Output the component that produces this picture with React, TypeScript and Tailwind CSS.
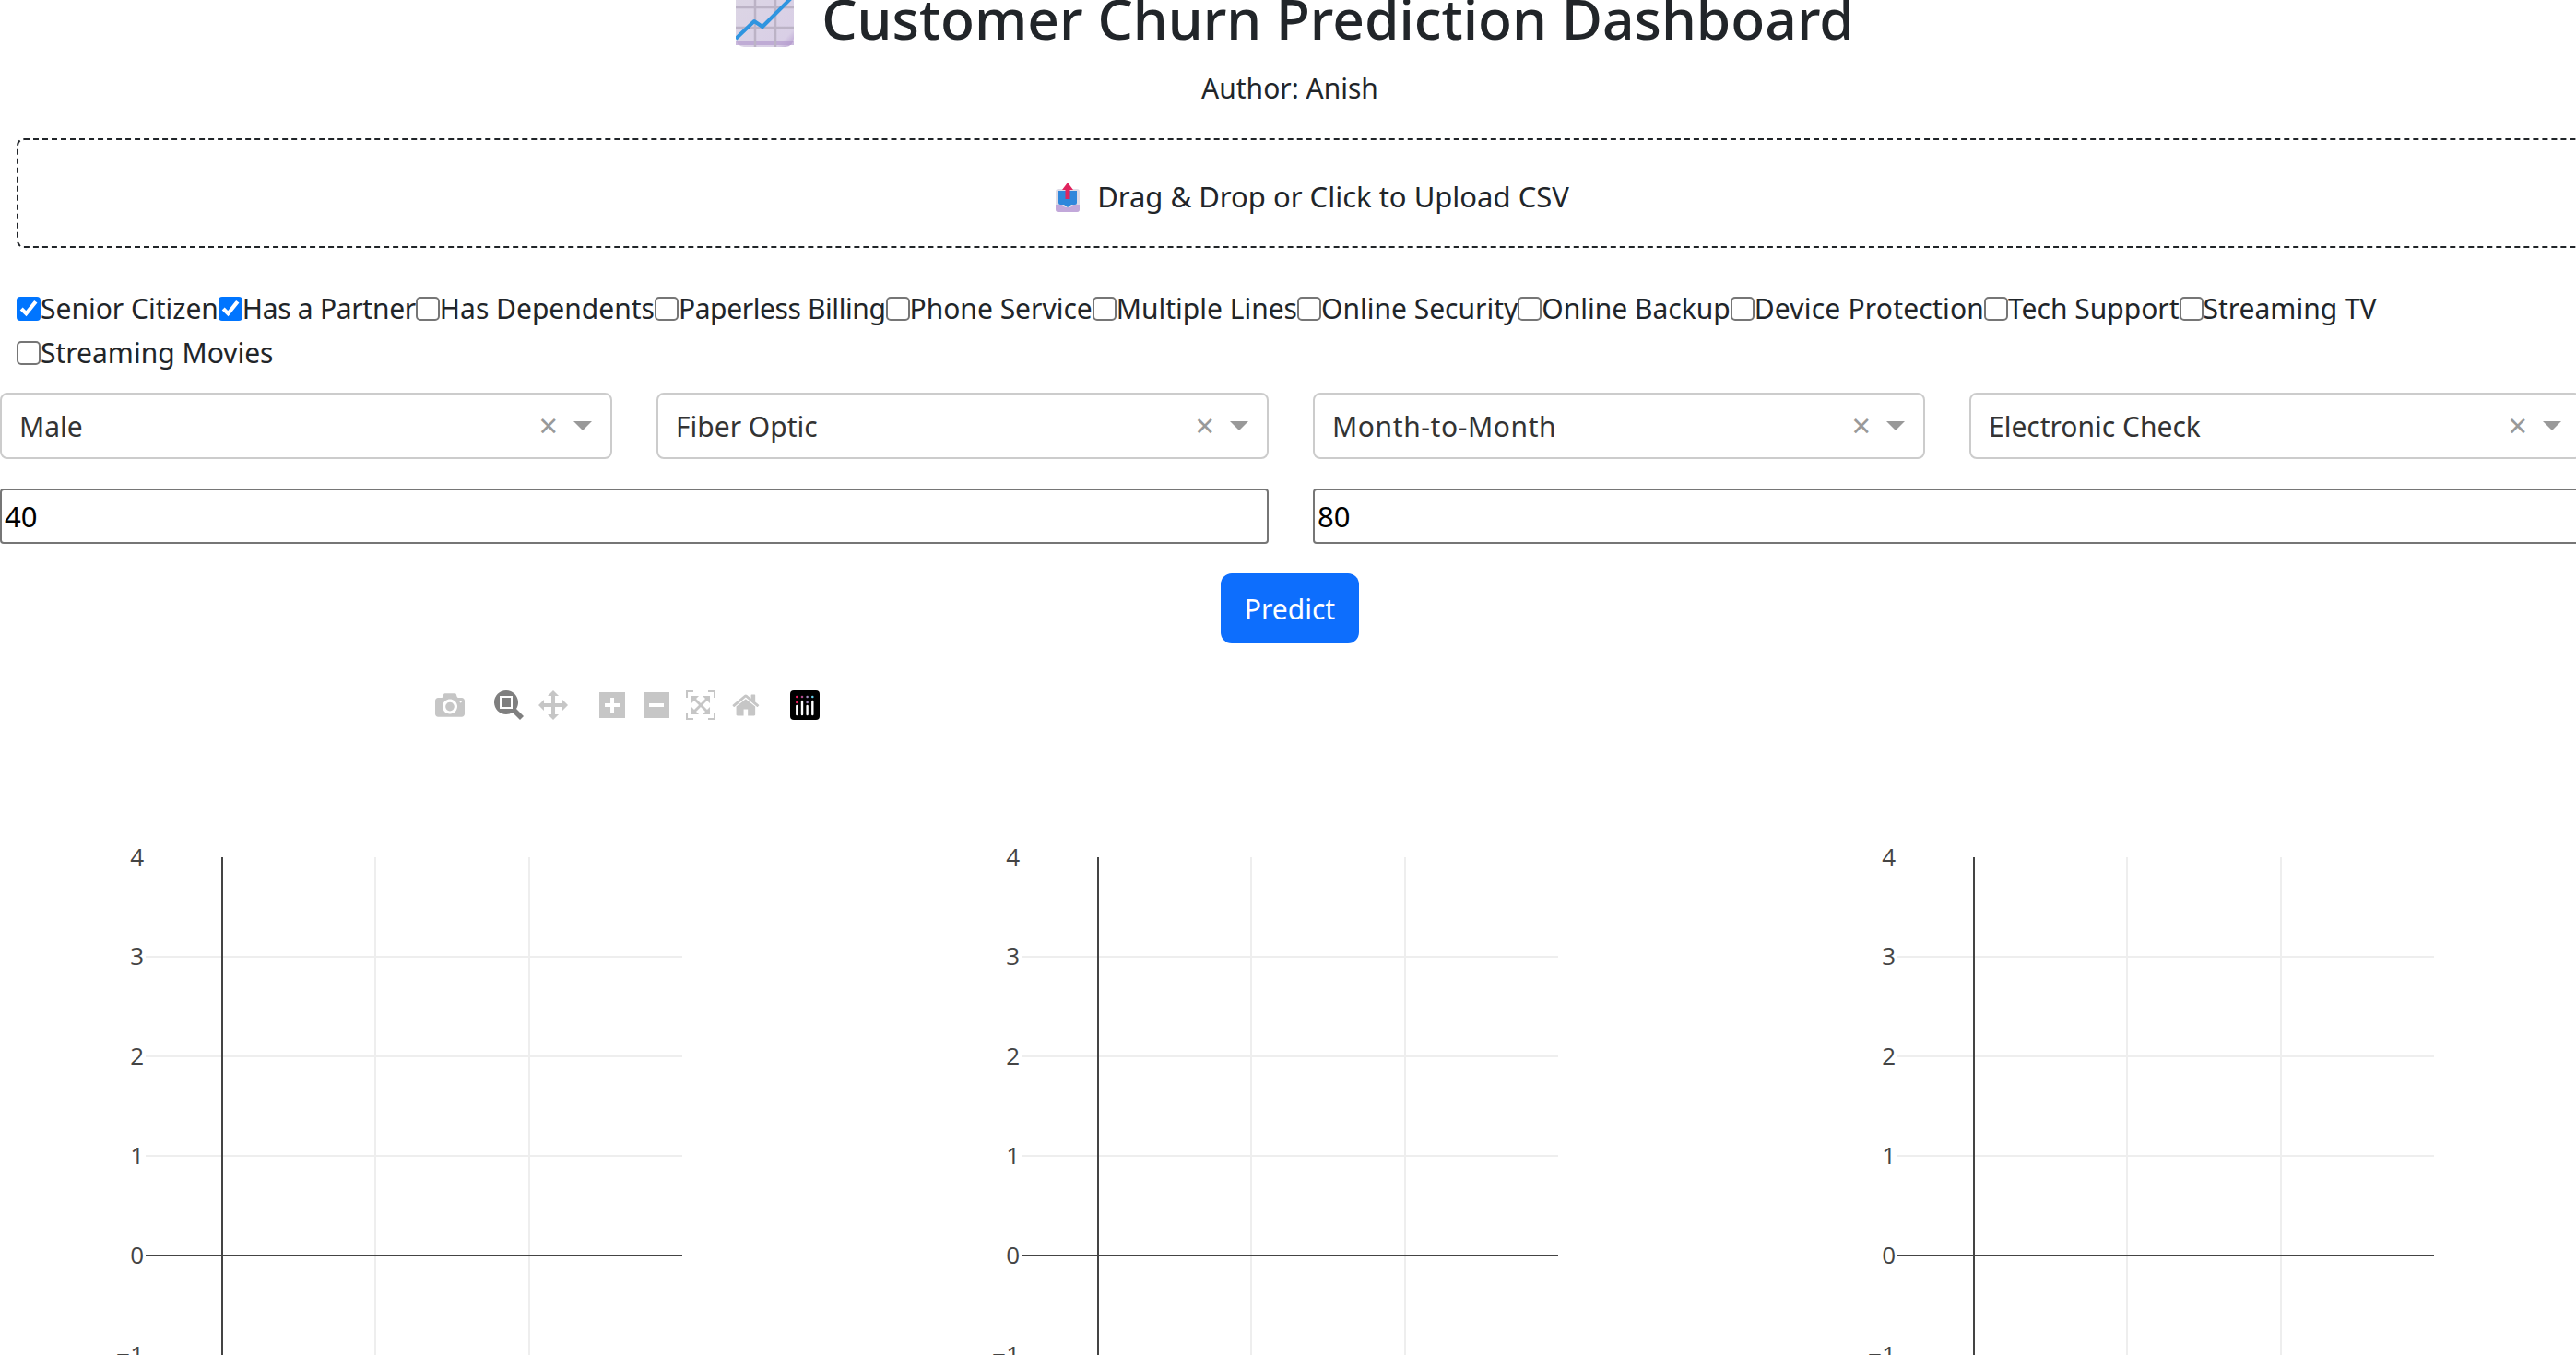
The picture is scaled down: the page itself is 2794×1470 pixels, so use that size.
import React from 'react'

const font = { fontFamily: '"Noto Sans", sans-serif' }

const options = [
  { label: 'Senior Citizen', checked: true, cls: '' },
  { label: 'Has a Partner', checked: true, cls: 'tracking-[-0.3px]' },
  { label: 'Has Dependents', cls: '' },
  { label: 'Paperless Billing', cls: 'tracking-[-0.4px]' },
  { label: 'Phone Service', cls: '' },
  { label: 'Multiple Lines', cls: '' },
  { label: 'Online Security', cls: '' },
  { label: 'Online Backup', cls: '' },
  { label: 'Device Protection', cls: 'tracking-[0.2px]' },
  { label: 'Tech Support', cls: '' },
  { label: 'Streaming TV', cls: '' },
  { label: 'Streaming Movies', cls: '' },
]

const selects = [
  { label: 'Male', cls: '' },
  { label: 'Fiber Optic', cls: '' },
  { label: 'Month-to-Month', cls: 'tracking-[0.6px]' },
  { label: 'Electronic Check', cls: '' },
]

const modeBarIcons = [
  { w: 1000, size: 32, ml: 0, fill: '#c6c6c6', d: 'M500 450c-83 0-150-67-150-150 0-83 67-150 150-150 83 0 150 67 150 150 0 83-67 150-150 150z m400 150h-120c-16 0-34 13-39 29l-31 93c-6 15-23 28-40 28h-340c-16 0-34-13-39-28l-31-94c-6-15-23-28-40-28h-120c-55 0-100-45-100-100v-450c0-55 45-100 100-100h800c55 0 100 45 100 100v450c0 55-45 100-100 100z m-400-550c-138 0-250 112-250 250 0 138 112 250 250 250 138 0 250-112 250-250 0-138-112-250-250-250z m365 380c-19 0-35 16-35 35 0 19 16 35 35 35 19 0 35-16 35-35 0-19-16-35-35-35z' },
  { w: 1000, size: 32, ml: 32, fill: '#7f7f7f', d: 'm1000-25l-250 251c40 63 63 138 63 218 0 224-182 406-407 406-224 0-406-182-406-406s183-406 407-406c80 0 155 22 218 62l250-250 125 125z m-812 250l0 438 437 0 0-438-437 0z m62 375l313 0 0-312-313 0 0 312z' },
  { w: 1000, size: 32, ml: 16, fill: '#c6c6c6', d: 'm1000 350l-187 188 0-125-250 0 0 250 125 0-188 187-187-187 125 0 0-250-250 0 0 125-188-188 186-187 0 125 252 0 0-250-125 0 187-188 188 188-125 0 0 250 250 0 0-126 187 188z' },
  { w: 875, size: 32, ml: 34, fill: '#c6c6c6', d: 'm1 787l0-875 875 0 0 875-875 0z m687-500l-187 0 0-187-125 0 0 187-188 0 0 125 188 0 0 187 125 0 0-187 187 0 0-125z' },
  { w: 875, size: 32, ml: 20, fill: '#c6c6c6', d: 'm0 788l0-876 875 0 0 876-875 0z m688-500l-500 0 0 125 500 0 0-125z' },
  { w: 1000, size: 32, ml: 18, fill: '#c6c6c6', d: 'm250 850l-187 0-63 0 0-62 0-188 63 0 0 188 187 0 0 62z m688 0l-188 0 0-62 188 0 0-188 62 0 0 188 0 62-62 0z m-875-938l0 188-63 0 0-188 0-62 63 0 187 0 0 62-187 0z m875 188l0-188-188 0 0-62 188 0 62 0 0 62 0 188-62 0z m-125 188l-1 0-93-94-156 156 156 156 92-93 2 0 0 250-250 0 0-2 93-92-156-156-156 156 94 92 0 2-250 0 0-250 0 0 93 93 157-156-157-156-93 94 0 0 0-250 250 0 0 0-94 93 156 157 156-157-93-93 0 0 250 0 0 250z' },
  { w: 928.6, size: 32, ml: 18, fill: '#c6c6c6', d: 'm786 296v-267q0-15-11-26t-25-10h-214v214h-143v-214h-214q-15 0-25 10t-11 26v267q0 1 0 2t0 2l321 264 321-264q1-1 1-4z m124 39l-34-41q-5-5-12-6h-2q-7 0-12 3l-386 322-386-322q-7-4-13-4-7 2-12 7l-34 41q-4 5-3 13t6 12l401 334q18 15 42 15t43-15l136-114v109q0 8 5 13t13 5h107q8 0 13-5t5-13v-227l122-102q5-5 6-12t-4-13z' },
]

function ChartEmoji() {
  return (
    <svg width="64" height="64" viewBox="0 0 64 64" className="shrink-0">
      <defs>
        <linearGradient id="sheet" x1="0" y1="0" x2="1" y2="1">
          <stop offset="0" stopColor="#dcd6e4" />
          <stop offset="0.85" stopColor="#d9cfe6" />
          <stop offset="1" stopColor="#b79fd0" />
        </linearGradient>
      </defs>
      <rect x="0" y="0" width="63" height="64" rx="9" fill="url(#sheet)" />
      <path d="M0 60h63" stroke="#b59ccf" strokeWidth="4" opacity="0.7" />
      <path d="M21 0v64M43 0v64M0 21h63M0 43h63" stroke="#bcb3c6" strokeWidth="2.5" />
      <path d="M0 55L20 36L29 42L61 10" fill="none" stroke="#2f95e0" strokeWidth="4" strokeLinejoin="round" />
    </svg>
  )
}

function UploadEmoji() {
  return (
    <svg width="26" height="32" viewBox="0 0 26 32" className="shrink-0">
      <rect x="0" y="7" width="26" height="25" rx="3" fill="#dedbe6" />
      <path d="M0 24h7l3 3h6l3-3h7v5a3 3 0 0 1-3 3H3a3 3 0 0 1-3-3z" fill="#c2a8da" />
      <path d="M3 9h20v13a2 2 0 0 1-2 2h-4l-4 3-4-3H5a2 2 0 0 1-2-2z" fill="#2f87db" />
      <path d="M13 0l6 8h-3.500v10h-5V8H7z" fill="#e0245e" />
    </svg>
  )
}

function PlotlyLogo() {
  return (
    <svg width="32" height="32" viewBox="0 0 32 32" className="ml-[33px]">
      <rect width="32" height="32" rx="4" fill="#000" />
      <circle cx="7.300" cy="7" r="1.300" fill="#ef1e5f" />
      <circle cx="13" cy="7" r="1.300" fill="#b24a8e" />
      <circle cx="18.600" cy="7" r="1.300" fill="#a58dc0" />
      <circle cx="24.300" cy="7" r="1.300" fill="#67d0ee" />
      <circle cx="7.300" cy="13" r="1.300" fill="#ef1e5f" />
      <circle cx="18.600" cy="13" r="1.300" fill="#a58dc0" />
      <path d="M7.300 17v9M13 12v14M18.600 17v9M24.300 12v14" stroke="#fff" strokeWidth="2.400" strokeLinecap="round" />
    </svg>
  )
}

function ModeBar() {
  return (
    <div className="absolute left-[472px] top-[19px] flex items-center">
      {modeBarIcons.map((icon, i) => (
        <svg
          key={i}
          width={(icon.w / 1000) * icon.size}
          height={icon.size}
          viewBox={`0 0 ${icon.w} 1000`}
          style={{ marginLeft: icon.ml }}
        >
          <path d={icon.d} fill={icon.fill} transform="matrix(1 0 0 -1 0 850)" />
        </svg>
      ))}
      <PlotlyLogo />
    </div>
  )
}

function Chart() {
  const ticks = [
    { label: '4', y: 200 },
    { label: '3', y: 308 },
    { label: '2', y: 416 },
    { label: '1', y: 524 },
    { label: '0', y: 632 },
    { label: '−1', y: 740 },
  ]
  return (
    <svg width="950" height="900" viewBox="0 0 950 900" className="shrink-0">
      <g shapeRendering="crispEdges">
        <path d="M407 200V900M574 200V900" stroke="#eeeeee" strokeWidth="2" />
        {ticks.slice(1, 4).map((t) => (
          <path key={t.label} d={`M158 ${t.y}H740`} stroke="#eeeeee" strokeWidth="2" />
        ))}
        <path d="M241 200V900" stroke="#444444" strokeWidth="2" />
        <path d="M158 632H740" stroke="#444444" strokeWidth="2" />
      </g>
      {ticks.map((t) => (
        <text key={t.label} x="156" y={t.y + 9} textAnchor="end" fontSize="26" fill="#444444" fontFamily='"Open Sans", sans-serif'>
          {t.label}
        </text>
      ))}
    </svg>
  )
}

function App() {
  return (
    <div className="h-screen w-screen overflow-hidden bg-white text-[#212529]" style={font}>
      <h1 className="-mt-[29px] flex h-[96px] items-center justify-center gap-[29px] pl-[15px] text-[60.5px] font-medium leading-[96px]">
        <ChartEmoji />
        <span className="mt-[2px]">Customer Churn Prediction Dashboard</span>
      </h1>
      <p className="mt-[5px] pl-[4px] text-center text-[30px] leading-[48px]">Author: Anish</p>

      <div className="mx-[18px] mt-[30px] flex h-[119px] w-[2808px] items-center justify-center gap-[19px] rounded-[8px] border-2 border-dashed border-[#212529] pt-[8px] pl-[3px] text-[31px]">
        <UploadEmoji />
        <span>Drag &amp; Drop or Click to Upload CSV</span>
      </div>

      <div className="mx-[18px] mt-[42px] w-[2808px] text-[30px] leading-[48px]">
        {options.map((o) => (
          <label key={o.label} className={`inline-block align-top ${o.cls}`}>
            <input type="checkbox" defaultChecked={o.checked} className="align-[-1px] [zoom:2]" />
            {o.label}
          </label>
        ))}
      </div>

      <div className="mt-[19px] grid w-[2800px] grid-cols-4 gap-x-[48px]">
        {selects.map((s) => (
          <div key={s.label} className="flex h-[72px] items-center rounded-[8px] border-2 border-[#cccccc] pl-[19px] text-[30px] text-[#333333]">
            <span className={`flex-1 ${s.cls}`}>{s.label}</span>
            <span className="mr-[5px] text-[36px] leading-none text-[#999999]">×</span>
            <span className="mr-[20px] ml-[12px] h-0 w-0 border-x-[10px] border-t-[10px] border-x-transparent border-t-[#999999]" />
          </div>
        ))}
      </div>

      <div className="mt-[32px] grid w-[2800px] grid-cols-2 gap-x-[48px]">
        <input defaultValue="40" className="h-[60px] rounded-[4px] border-2 border-[#767676] px-[3px] text-[31px] text-black" />
        <input defaultValue="80" className="h-[60px] rounded-[4px] border-2 border-[#767676] px-[3px] text-[31px] text-black" />
      </div>

      <div className="mt-[32px] flex justify-center pl-[4px]">
        <button className="h-[76px] w-[150px] rounded-[12px] bg-[#0d6efd] text-[30px] text-white">Predict</button>
      </div>

      <div className="relative mt-[32px] flex w-[2850px]">
        <ModeBar />
        <Chart />
        <Chart />
        <Chart />
      </div>
    </div>
  )
}

export default App
